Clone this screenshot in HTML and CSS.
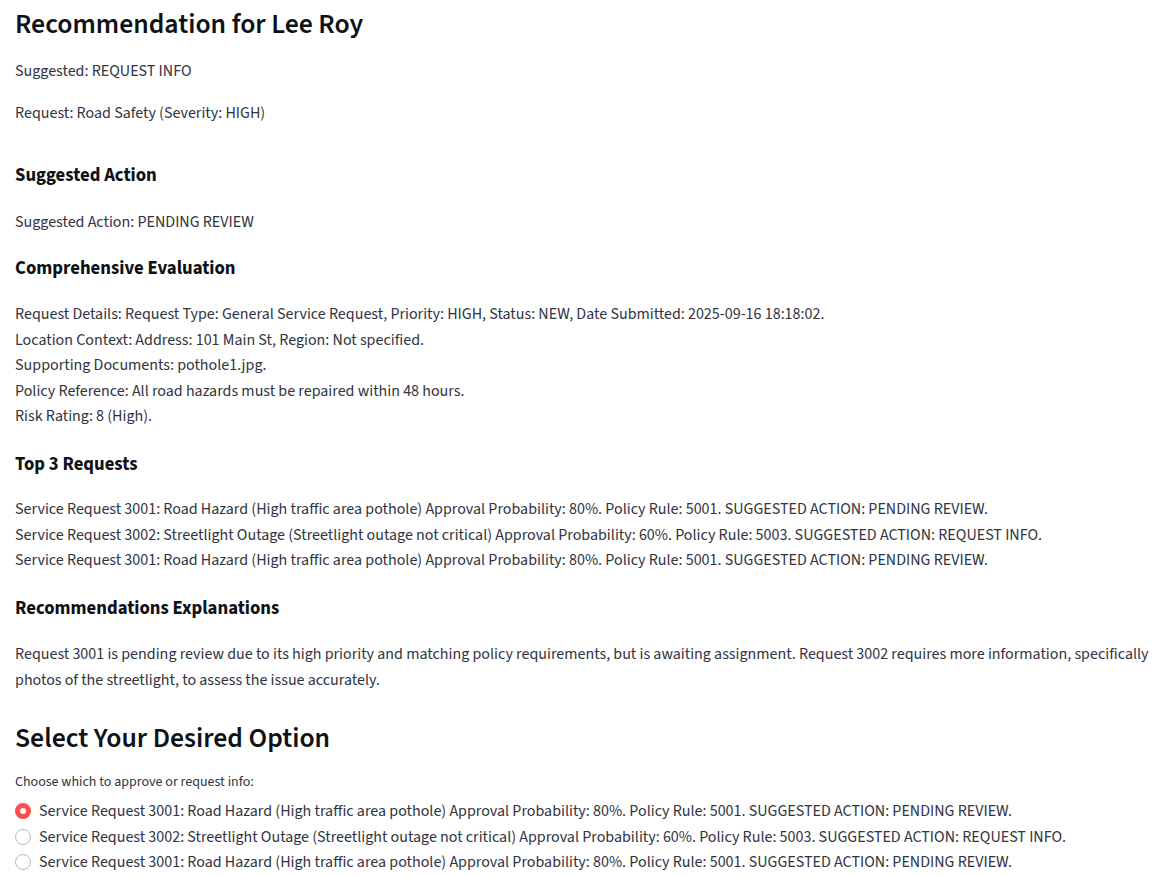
FILE: index.html
```html
<!DOCTYPE html>
<html lang="en">
<head>
<meta charset="utf-8">
<title>Recommendation for Lee Roy</title>
<link rel="stylesheet" href="styles.css">
</head>
<body>
<main class="page">
  <h1 class="title">Recommendation for Lee Roy</h1>
  <p class="text g0">Suggested: REQUEST INFO</p>
  <p class="text g1">Request: Road Safety (Severity: HIGH)</p>

  <h4 class="sub g2">Suggested Action</h4>
  <p class="text g3">Suggested Action: PENDING REVIEW</p>

  <h4 class="sub g4">Comprehensive Evaluation</h4>
  <p class="text g5">Request Details: Request Type: General Service Request, Priority: HIGH, Status: NEW, Date Submitted: 2025-09-16 18:18:02.<br>Location Context: Address: 101 Main St, Region: Not specified.<br>Supporting Documents: pothole1.jpg.<br>Policy Reference: All road hazards must be repaired within 48 hours.<br>Risk Rating: 8 (High).</p>

  <h4 class="sub g6">Top 3 Requests</h4>
  <p class="text g7">Service Request 3001: Road Hazard (High traffic area pothole) Approval Probability: 80%. Policy Rule: 5001. SUGGESTED ACTION: PENDING REVIEW.<br>Service Request 3002: Streetlight Outage (Streetlight outage not critical) Approval Probability: 60%. Policy Rule: 5003. SUGGESTED ACTION: REQUEST INFO.<br>Service Request 3001: Road Hazard (High traffic area pothole) Approval Probability: 80%. Policy Rule: 5001. SUGGESTED ACTION: PENDING REVIEW.</p>

  <h4 class="sub g6">Recommendations Explanations</h4>
  <p class="text g5">Request 3001 is pending review due to its high priority and matching policy requirements, but is awaiting assignment. Request 3002 requires more information, specifically photos of the streetlight, to assess the issue accurately.</p>

  <h2 class="title g8">Select Your Desired Option</h2>
  <div class="radio-group">
    <div class="radio-label">Choose which to approve or request info:</div>
    <div class="radio-list">
      <label class="radio-row"><span class="radio checked"></span><span>Service Request 3001: Road Hazard (High traffic area pothole) Approval Probability: 80%. Policy Rule: 5001. SUGGESTED ACTION: PENDING REVIEW.</span></label>
      <label class="radio-row"><span class="radio"></span><span>Service Request 3002: Streetlight Outage (Streetlight outage not critical) Approval Probability: 60%. Policy Rule: 5003. SUGGESTED ACTION: REQUEST INFO.</span></label>
      <label class="radio-row"><span class="radio"></span><span>Service Request 3001: Road Hazard (High traffic area pothole) Approval Probability: 80%. Policy Rule: 5001. SUGGESTED ACTION: PENDING REVIEW.</span></label>
    </div>
  </div>
</main>
</body>
</html>
```
FILE: styles.css
```css
html, body {
  margin: 0;
  padding: 0;
  background: #ffffff;
}
body {
  font-family: "Source Sans 3", "Source Sans Pro", Lato, sans-serif;
  color: #31333f;
  font-size: 16px;
}
.page {
  display: flex;
  flex-direction: column;
  align-items: flex-start;
  padding: 8px 6px 0 15px;
}
.title {
  margin: 0;
  font-size: 27.7px;
  line-height: 33.6px;
  font-weight: 600;
  color: #0e1117;
}
.sub {
  margin: 0;
  font-size: 18.7px;
  line-height: 24px;
  font-weight: 700;
  color: #0e1117;
}
.text {
  margin: 0;
  font-size: 16px;
  line-height: 1.6;
}
.g0 { margin-top: 17.4px; }
.g1 { margin-top: 16.4px; }
.g2 { margin-top: 36.4px; }
.g3 { margin-top: 23.5px; }
.g4 { margin-top: 19.5px; }
.g5 { margin-top: 22.5px; }
.g6 { margin-top: 22px; }
.g7 { margin-top: 21px; }
.g8 { margin-top: 29px; }

.radio-group {
  margin-top: 15px;
  display: flex;
  flex-direction: column;
}
.radio-label {
  font-size: 14px;
  line-height: 1.6;
}
.radio-list {
  margin-top: 5px;
  display: flex;
  flex-direction: column;
}
.radio-row {
  display: flex;
  align-items: center;
  gap: 8px;
  height: 25.6px;
  font-size: 16px;
}
.radio {
  box-sizing: border-box;
  width: 16px;
  height: 16px;
  border-radius: 50%;
  border: 1px solid #b9bac0;
  background: #ffffff;
  flex: none;
}
.radio.checked {
  border: 5px solid #ff4b4b;
  background: #ffffff;
}
```
